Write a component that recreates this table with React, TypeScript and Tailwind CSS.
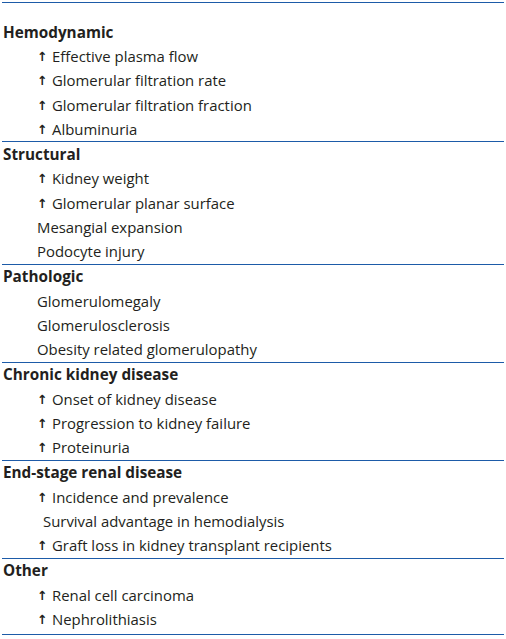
import React from "react";

type Item = { text: string; up: boolean; extra?: boolean };
type Section = { title: string; items: Item[] };

const sections: Section[] = [
  {
    title: "Hemodynamic",
    items: [
      { text: "Effective plasma flow", up: true },
      { text: "Glomerular filtration rate", up: true },
      { text: "Glomerular filtration fraction", up: true },
      { text: "Albuminuria", up: true },
    ],
  },
  {
    title: "Structural",
    items: [
      { text: "Kidney weight", up: true },
      { text: "Glomerular planar surface", up: true },
      { text: "Mesangial expansion", up: false },
      { text: "Podocyte injury", up: false },
    ],
  },
  {
    title: "Pathologic",
    items: [
      { text: "Glomerulomegaly", up: false },
      { text: "Glomerulosclerosis", up: false },
      { text: "Obesity related glomerulopathy", up: false },
    ],
  },
  {
    title: "Chronic kidney disease",
    items: [
      { text: "Onset of kidney disease", up: true },
      { text: "Progression to kidney failure", up: true },
      { text: "Proteinuria", up: true },
    ],
  },
  {
    title: "End-stage renal disease",
    items: [
      { text: "Incidence and prevalence", up: true },
      { text: "Survival advantage in hemodialysis", up: false, extra: true },
      { text: "Graft loss in kidney transplant recipients", up: true },
    ],
  },
  {
    title: "Other",
    items: [
      { text: "Renal cell carcinoma", up: true },
      { text: "Nephrolithiasis", up: true },
    ],
  },
];

export default function App() {
  return (
    <div
      className="w-[506px] h-[639px] bg-white px-[2px] pt-[2px] text-[#231f20]"
      style={{ fontFamily: '"Open Sans", "Noto Sans", sans-serif' }}
    >
      <div className="border-t border-[#1d5ba8] pt-[17px]">
        {sections.map((s, i) => (
          <div
            key={s.title}
            className={i === 0 ? "" : "border-t border-[#1d5ba8]"}
          >
            <div className="h-[24.25px] flex items-center pl-[1px] font-bold text-[15.3px]">
              {s.title}
            </div>
            {s.items.map((it) => (
              <div
                key={it.text}
                className={
                  "h-[24.25px] flex items-center text-[14.9px] " +
                  (it.extra ? "pl-[41px]" : "pl-[35px]")
                }
              >
                {it.up && (
                  <span
                    className="w-[15px] inline-block translate-y-[1px] font-bold"
                    style={{ fontFamily: '"DejaVu Sans", sans-serif', fontSize: "12.5px" }}
                  >
                    ↑
                  </span>
                )}
                <span>{it.text}</span>
              </div>
            ))}
          </div>
        ))}
        <div className="h-[4px] border-b border-[#1d5ba8]" />
      </div>
    </div>
  );
}
